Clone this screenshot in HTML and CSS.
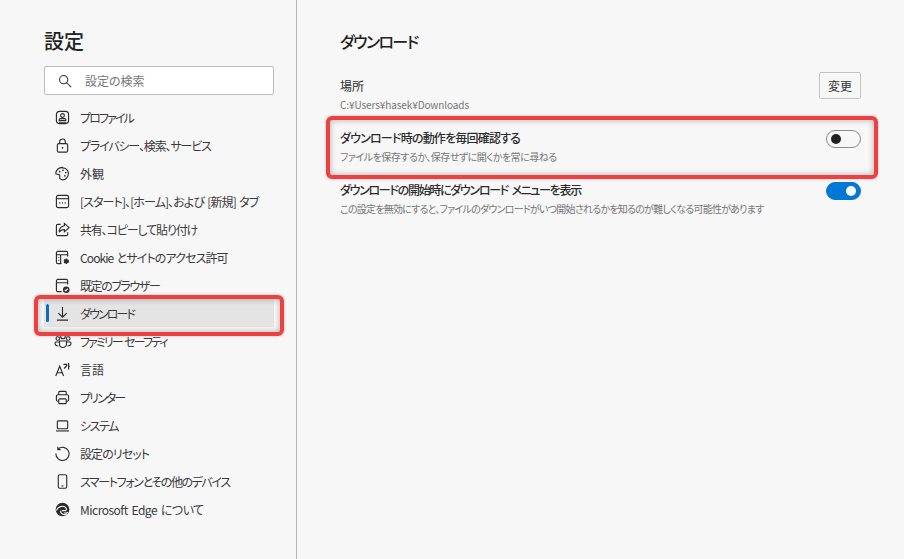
FILE: index.html
```html
<!DOCTYPE html>
<html lang="ja">
<head>
<meta charset="utf-8">
<title>設定</title>
<link rel="stylesheet" href="styles.css">
</head>
<body>
<div class="app">
  <aside class="sidebar">
    <h1 class="title">設定</h1>
    <div class="search">
      <svg class="search-icon" viewBox="0 0 16 16"><circle cx="6.500" cy="6.500" r="4.700"/><path d="M10 10l5 5"/></svg>
      <span>設定の検索</span>
    </div>
    <nav class="nav">
      <a class="item ls-4"><svg class="ico" viewBox="0 0 16 16"><rect x="1.500" y="1.500" width="13" height="13" rx="3.500"/><circle cx="8" cy="5.800" r="2"/><path d="M4.500 11.200v-1q0-1 1-1h5q1 0 1 1v1zM4 13h8"/></svg><span>プロファイル</span></a>
      <a class="item ls-2"><svg class="ico" viewBox="0 0 16 16"><rect x="2.500" y="6" width="11" height="9" rx="1.500"/><path d="M5 6V4a3 3 0 0 1 6 0v2"/><circle class="solid" cx="8" cy="10.500" r="1"/></svg><span>プライバシー、検索、サービス</span></a>
      <a class="item"><svg class="ico" viewBox="0 0 16 16"><path d="M8 1.500C4 1.500 .8 4.500 .8 8c1 1.500 3 .5 4 1.500s-.5 2.500.5 4c1 1 2.500 1.500 4 1.200 2-.5 5-3 5-6.700 0-3.500-2.800-6-6.300-6z"/><circle class="solid" cx="5" cy="6" r=".9"/><circle class="solid" cx="8.500" cy="4.500" r=".9"/><circle class="solid" cx="11.500" cy="7" r=".9"/><circle class="solid" cx="10.500" cy="10.500" r=".9"/></svg><span>外観</span></a>
      <a class="item ls-1"><svg class="ico" viewBox="0 0 16 16"><rect x="1.500" y="1.500" width="13" height="13" rx="2"/><path d="M1.500 5h13"/><path class="dots" d="M4.500 9.500h1.200M7.400 9.500h1.200M10.300 9.500h1.200"/></svg><span>[スタート]、[ホーム]、および [新規] タブ</span></a>
      <a class="item ls-2"><svg class="ico" viewBox="0 0 16 16"><path d="M6 2.500H3a1.500 1.500 0 0 0-1.500 1.500v9A1.500 1.500 0 0 0 3 14.500h9a1.500 1.500 0 0 0 1.500-1.500v-2"/><path d="M10 1.500l5 4.500-5 4.500V8C7.500 8 5.500 9 4.500 11c0-4 2-6.500 5.500-7z"/></svg><span>共有、コピーして貼り付け</span></a>
      <a class="item ls-1"><svg class="ico" viewBox="0 0 16 16"><path d="M7 14.500H3A1.500 1.500 0 0 1 1.500 13V3A1.500 1.500 0 0 1 3 1.500h9A1.500 1.500 0 0 1 13.500 3v4M1.500 5h12M6 5v9.500M3.500 8h1M3.500 11h1"/><circle class="gear" cx="12" cy="12" r="2.300"/></svg><span>Cookie とサイトのアクセス許可</span></a>
      <a class="item ls-3"><svg class="ico" viewBox="0 0 16 16"><path d="M7 14.500H3A1.500 1.500 0 0 1 1.500 13V3A1.500 1.500 0 0 1 3 1.500h9A1.500 1.500 0 0 1 13.500 3v4M1.500 5h12"/><circle class="solid" cx="12" cy="12.500" r="3.500"/><path class="cut" d="M10.300 12.500l1.200 1.200 2.200-2.400"/></svg><span>既定のブラウザー</span></a>
      <a class="item active ls-4"><svg class="ico" viewBox="0 0 16 16"><path d="M8 1v10.500M3.500 7.500L8 12l4.500-4.500M2 15h12"/></svg><span>ダウンロード</span></a>
      <a class="item ls-4"><svg class="ico ico-wide" viewBox="0 0 18 16"><circle cx="9" cy="3.500" r="2.300"/><circle cx="3.800" cy="5.500" r="1.800"/><circle cx="14.200" cy="5.500" r="1.800"/><path d="M5.500 8h7v3a3.500 3.500 0 0 1-7 0zM5.500 9H2a1 1 0 0 0-1 1c0 2 1.500 3 3.500 3M12.500 9H16a1 1 0 0 1 1 1c0 2-1.500 3-3.500 3"/></svg><span>ファミリー セーフティ</span></a>
      <a class="item"><svg class="ico" viewBox="0 0 16 16"><path d="M.8 15L5 4.500 9.200 15M2.300 11.500h5.400M9 2.500h3.500c0 2-1 3.500-3 4.500M14.500 1v7M14.500 4.500H16"/></svg><span>言語</span></a>
      <a class="item ls-4"><svg class="ico" viewBox="0 0 16 16"><path d="M4 5V2.500A1 1 0 0 1 5 1.500h6a1 1 0 0 1 1 1V5M4 12H3a1.500 1.500 0 0 1-1.500-1.500V6.500A1.500 1.500 0 0 1 3 5h10a1.500 1.500 0 0 1 1.500 1.500v4A1.500 1.500 0 0 1 13 12h-1"/><rect x="4" y="9.500" width="8" height="5" rx="1"/></svg><span>プリンター</span></a>
      <a class="item ls-3"><svg class="ico" viewBox="0 0 16 16"><rect x="2.500" y="3" width="11" height="8.500" rx="1"/><path d="M1 13.800h14"/></svg><span>システム</span></a>
      <a class="item ls-1"><svg class="ico" viewBox="0 0 16 16"><path d="M3.200 3.300A7 7 0 1 1 1 8M3 .8v3h3"/></svg><span>設定のリセット</span></a>
      <a class="item ls-3"><svg class="ico" viewBox="0 0 16 16"><rect x="3.500" y=".8" width="9" height="14.400" rx="1.500"/><path d="M7 12.800h2"/></svg><span>スマートフォンとその他のデバイス</span></a>
      <a class="item ls-0"><svg class="ico" viewBox="0 0 16 16"><circle class="solid" cx="8" cy="8" r="7.300"/><path class="cut" d="M1.500 9C3 5 8 3.200 11.200 5.800c1.300 1.200 1.200 3 0 3.400H7.200M6 9.500c-.3 2.800 3 5.200 7.200 3.200M14 10.800c-1.300 1-2.800 1.300-4.300.6"/></svg><span>Microsoft Edge について</span></a>
    </nav>
    <div class="mark mark-nav"></div>
  </aside>
  <main class="content">
    <h2 class="heading">ダウンロード</h2>
    <section class="row">
      <div>
        <div class="label">場所</div>
        <div class="sub path">C:¥Users¥hasek¥Downloads</div>
      </div>
      <button class="btn">変更</button>
    </section>
    <section class="row">
      <div>
        <div class="label strong s1">ダウンロード時の動作を毎回確認する</div>
        <div class="sub">ファイルを保存するか、保存せずに開くかを常に尋ねる</div>
      </div>
      <span class="toggle"></span>
    </section>
    <section class="row">
      <div>
        <div class="label strong s2">ダウンロードの開始時にダウンロード メニューを表示</div>
        <div class="sub long">この設定を無効にすると、ファイルのダウンロードがいつ開始されるかを知るのが難しくなる可能性があります</div>
      </div>
      <span class="toggle on"></span>
    </section>
    <div class="mark mark-row"></div>
  </main>
</div>
</body>
</html>
```
FILE: styles.css
```css
* { box-sizing: border-box; }
html, body { margin: 0; height: 100%; }
body {
  background: #f7f7f7;
  color: #2b2b2b;
  font-family: "Noto Sans CJK JP", "Noto Sans", sans-serif;
  font-feature-settings: "palt";
  font-size: 12px;
  overflow: hidden;
}
.app { display: flex; height: 559px; position: relative; }
.sidebar {
  width: 297px;
  flex: none;
  border-right: 1px solid #b5b5b5;
  padding: 0 22px 0 44px;
}
.title {
  margin: 0;
  padding-top: 27px;
  height: 66px;
  font-size: 20px;
  line-height: 28px;
  font-weight: 500;
  color: #222;
}
.search {
  display: flex;
  align-items: center;
  gap: 13px;
  height: 29px;
  padding-left: 13px;
  background: #fff;
  border: 1px solid #bdbdbd;
  border-radius: 2px;
  color: #777;
}
.search-icon { width: 14px; height: 14px; fill: none; stroke: #333; stroke-width: 1.200; }
.nav { display: flex; flex-direction: column; margin-top: 8px; }
.item {
  position: relative;
  display: flex;
  align-items: center;
  gap: 10px;
  height: 28px;
  padding-left: 11px;
  color: #3a3a3a;
  white-space: nowrap;
  word-spacing: 1.5px;
}
.ls-0 { letter-spacing: -.5px; }
.ls-1 { letter-spacing: -.9px; }
.ls-2 { letter-spacing: -1.15px; }
.ls-3 { letter-spacing: -1.4px; }
.ls-4 { letter-spacing: -1.9px; }
.item.active { background: #e4e4e4; }
.item.active::before {
  content: "";
  position: absolute;
  left: 2px;
  top: 5px;
  width: 3px;
  height: 18px;
  border-radius: 2px;
  background: #0f6cbd;
}
.ico { width: 15px; height: 15px; flex: none; fill: none; stroke: #2b2b2b; stroke-width: 1.200; }
.ico-wide { width: 18px; height: 16px; margin: 0 -1.5px; stroke-width: 1.100; }
.ico .solid { fill: #2b2b2b; stroke: none; }
.ico .gear { fill: #2b2b2b; stroke: #2b2b2b; stroke-dasharray: 1.500 .8; }
.ico .dots { stroke-width: 1.400; }
.ico .cut { stroke: #f7f7f7; stroke-width: 1.200; }
.mark {
  position: absolute;
  border: 4px solid #ef4040;
  border-radius: 6px;
  box-shadow: inset 0 0 6px rgba(0, 0, 0, .3), 0 0 3px rgba(0, 0, 0, .25);
  pointer-events: none;
}
.mark-nav { left: 34px; top: 295px; width: 250px; height: 41px; }
.mark-row { left: 326px; top: 116px; width: 552px; height: 63px; }
.content { flex: 1; padding: 0 43px 0 43px; }
.heading {
  margin: 0;
  padding-top: 29px;
  height: 72px;
  font-size: 16px;
  line-height: 24px;
  font-weight: 500;
  letter-spacing: -1.6px;
  color: #222;
}
.row {
  display: flex;
  justify-content: space-between;
  align-items: flex-start;
  height: 52px;
}
.label { font-size: 12px; line-height: 18px; padding-top: 5px; color: #2b2b2b; }
.label.strong { font-weight: 500; }
.s1 { letter-spacing: -.8px; }
.s2 { letter-spacing: -1.3px; word-spacing: 2px; }
.sub { font-size: 10px; line-height: 14px; margin-top: 3px; color: #767676; letter-spacing: -.5px; }
.sub.path { letter-spacing: -.1px; }
.sub.long { letter-spacing: -.76px; }
.btn {
  width: 42px;
  height: 27px;
  padding: 0;
  background: #f7f7f7;
  border: 1px solid #c4c4c4;
  border-radius: 2px;
  font: inherit;
  font-feature-settings: inherit;
  color: #333;
}
.toggle {
  position: relative;
  width: 35px;
  height: 18px;
  margin-top: 6px;
  border: 1px solid #8a8a8a;
  border-radius: 9px;
  background: #f7f7f7;
}
.toggle::after {
  content: "";
  position: absolute;
  left: 4px;
  top: 3px;
  width: 10px;
  height: 10px;
  border-radius: 50%;
  background: #222;
}
.toggle.on { background: #0078d4; border-color: #0078d4; }
.toggle.on::after { left: auto; right: 4px; background: #fff; }
```
